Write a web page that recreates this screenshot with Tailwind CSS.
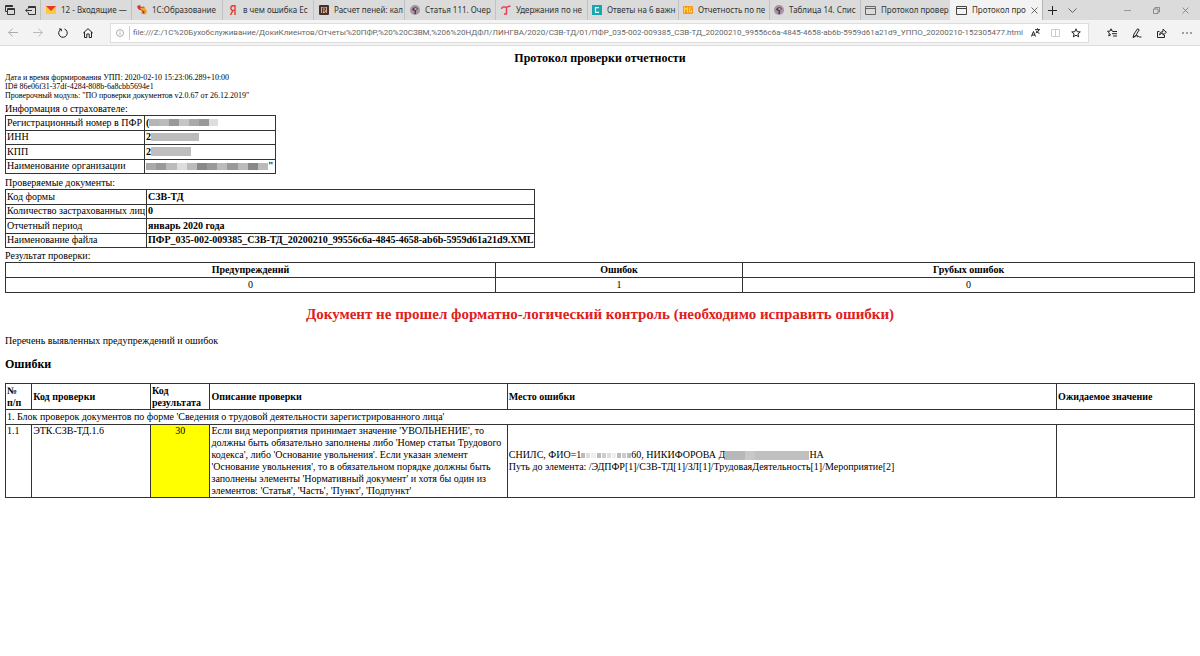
<!DOCTYPE html>
<html lang="ru">
<head>
<meta charset="utf-8">
<title>Протокол проверки отчетности</title>
<script src="https://cdn.jsdelivr.net/npm/@tailwindcss/browser@4"></script>
</head>
<body class="bg-white text-black font-['Liberation_Serif',serif] text-[10px] leading-[12px]">
<header class="font-['Noto_Sans',sans-serif] text-[8px] leading-[12px] text-[#333]">
  <nav class="flex h-5 items-stretch bg-[#dadbda]" aria-label="Вкладки">
    <div class="flex w-10 shrink-0 items-center justify-between pl-[5px] pr-1">
      <button aria-label="Отложенные вкладки"><svg class="size-[10px]" viewBox="0 0 10 10" fill="none" stroke="#333"><path d="M2 6.500H.5v-6h7V2M.5 1.500h7M2.500 3.500h7v6h-7zM2.500 4.500h7"/></svg></button>
      <button aria-label="Отложить вкладки"><svg class="h-[9px] w-[11px]" viewBox="0 0 11 9" fill="none" stroke="#333"><path d="M3.500 2.500V.5h7v8h-7v-2M3.500 1.500h7M7 4.500H.7M2.500 2.700.7 4.500l1.800 1.800"/></svg></button>
    </div>
    <a href="#" class="flex w-[91px] shrink-0 items-center gap-[5px] border-l border-[#c2c2c2] pl-[5px] whitespace-nowrap"><svg class="size-[10px] shrink-0" viewBox="0 0 10 10"><path d="M0 1h10v8H0z" fill="#ffc83a"/><path d="M0 1h10L5 6z" fill="#e3382e"/></svg><span>12 - Входящие —</span></a>
    <a href="#" class="flex w-[91px] shrink-0 items-center gap-[5px] border-l border-[#c2c2c2] pl-[5px] whitespace-nowrap"><svg class="size-[10px] shrink-0" viewBox="0 0 10 10"><path d="M0 1l3-1 1 2 3-.5 1 2-2 1 .500 2L3 5 1 4z" fill="#d33a2c"/><path d="M3 3l4-.5 3 3-1 4-5-1 1-3z" fill="#e8a72c"/><path d="M5 5l3 2-2 2z" fill="#b52c25"/></svg><span>1С:Образование</span></a>
    <a href="#" class="flex w-[91px] shrink-0 items-center gap-[6px] border-l border-[#c2c2c2] pl-[6px] whitespace-nowrap"><svg class="h-[10px] w-2 shrink-0" viewBox="0 0 8 10" fill="none" stroke="#e43d33" stroke-width="1.400"><path d="M6 10V.700H4.300C1 .700 1 5.400 4.300 5.400H6M4 5.400 1.500 10"/></svg><span>в чем ошибка Ес</span></a>
    <a href="#" class="flex w-[91px] shrink-0 items-center gap-[5px] border-l border-[#c2c2c2] pl-[5px] whitespace-nowrap"><svg class="size-[10px] shrink-0" viewBox="0 0 10 10"><rect width="10" height="10" rx="1" fill="#4a302b"/><path d="M2 2h6v6H2z" fill="#d8a98c"/><path d="M3.500 8V3h3v2h-2L7 8" fill="none" stroke="#352320" stroke-width=".8"/></svg><span>Расчет пеней: кал</span></a>
    <a href="#" class="flex w-[91px] shrink-0 items-center gap-[5px] border-l border-[#c2c2c2] pl-[5px] whitespace-nowrap"><svg class="size-[10px] shrink-0" viewBox="0 0 10 10"><circle cx="5" cy="5" r="5" fill="#a595a4"/><path d="M2 5c0-3 5-4 6-1L6 5.500V9H4.500V6z" fill="#553d50"/><path d="M4.500 3h2v2h-2z" fill="#d3a194"/></svg><span>Статья 111. Очер</span></a>
    <a href="#" class="flex w-[92px] shrink-0 items-center gap-[5px] border-l border-[#c2c2c2] pl-[5px] whitespace-nowrap"><svg class="size-[10px] shrink-0" viewBox="0 0 10 10" fill="none" stroke="#e6425a" stroke-width="1.500"><path d="M.7 4C.7 1 3 2.200 5 2.200S8 1 9.500 1M5.500 2.200V9M3 9h3"/></svg><span>Удержания по не</span></a>
    <a href="#" class="flex w-[91px] shrink-0 items-center gap-[5px] border-l border-[#c2c2c2] pl-1 whitespace-nowrap"><svg class="size-[10px] shrink-0" viewBox="0 0 10 10"><path fill="#18a7ae" d="M0 0h10v10H0z"/><path d="M7 2.700H3.500v4.600H7" fill="none" stroke="#fff" stroke-width="1.200"/></svg><span>Ответы на 6 важн</span></a>
    <a href="#" class="flex w-[91px] shrink-0 items-center gap-[5px] border-l border-[#c2c2c2] pl-1 whitespace-nowrap"><svg class="size-[10px] shrink-0" viewBox="0 0 10 10"><rect y="1" width="10" height="8" rx="1" fill="#f79a1c"/><path d="M1.500 7.500v-5L3 4.500l1.500-2v5M8.500 3h-2v4h2V5" fill="none" stroke="#ffdc50"/></svg><span>Отчетность по пе</span></a>
    <a href="#" class="flex w-[91px] shrink-0 items-center gap-[5px] border-l border-[#c2c2c2] pl-1 whitespace-nowrap"><svg class="size-[10px] shrink-0" viewBox="0 0 10 10"><circle cx="5" cy="5" r="5" fill="#a595a4"/><path d="M2 5c0-3 5-4 6-1L6 5.500V9H4.500V6z" fill="#553d50"/><path d="M4.500 3h2v2h-2z" fill="#d3a194"/></svg><span>Таблица 14. Спис</span></a>
    <a href="#" class="flex w-[90px] shrink-0 items-center gap-[5px] border-l border-[#c2c2c2] pl-1 whitespace-nowrap"><svg class="h-[9px] w-[11px] shrink-0" viewBox="0 0 11 9" fill="none" stroke="#666"><path d="M.5.5h10v8H.5zM.5 2.500h10"/></svg><span>Протокол провер</span></a>
    <div class="flex w-[93px] shrink-0 items-center gap-[5px] border-r border-[#b5b5b5] bg-[#f3f3f3] pl-[6px] pr-[7px] whitespace-nowrap"><svg class="h-[9px] w-[11px] shrink-0" viewBox="0 0 11 9" fill="none" stroke="#444"><path d="M.5.5h10v8H.5zM.5 2.500h10"/></svg><a href="#" class="flex-1">Протокол про</a><button aria-label="Закрыть вкладку"><svg class="size-[7px]" viewBox="0 0 7 7" stroke="#444" stroke-width=".8"><path d="m.5.5 6 6m0-6-6 6"/></svg></button></div>
    <button class="pl-[5px]" aria-label="Новая вкладка"><svg class="size-[9px]" viewBox="0 0 9 9" stroke="#222"><path d="M4.500 0v9M0 4.500h9"/></svg></button>
    <button class="pl-[11px]" aria-label="Список вкладок"><svg class="h-[5px] w-[9px]" viewBox="0 0 9 5" fill="none" stroke="#555" stroke-width=".9"><path d="m.5.5 4 4 4-4"/></svg></button>
    <div class="ml-auto flex items-center gap-[22px] pr-[11px]">
      <button aria-label="Свернуть"><svg class="size-[7px]" viewBox="0 0 7 7" stroke="#999"><path d="M0 3.500h7"/></svg></button>
      <button aria-label="Восстановить"><svg class="size-[7px]" viewBox="0 0 7 7" fill="none" stroke="#777" stroke-width=".8"><path d="M.5 2h4.500v4.500H.5zM2 2V.5h4.500V5H5"/></svg></button>
      <button aria-label="Закрыть"><svg class="size-[7px]" viewBox="0 0 7 7" stroke="#777" stroke-width=".8"><path d="m.5.5 6 6m0-6-6 6"/></svg></button>
    </div>
  </nav>
  <div class="flex h-[26px] items-center border-b border-[#dcdcdc] bg-[#f3f3f3]">
    <div class="flex w-[110px] shrink-0 items-center gap-[15px] pl-2">
      <button aria-label="Назад"><svg class="h-[9px] w-[10px]" viewBox="0 0 10 9" fill="none" stroke="#aaa"><path d="M10 4.500H.7m4-4-4 4 4 4"/></svg></button>
      <button aria-label="Вперед"><svg class="h-[9px] w-[10px]" viewBox="0 0 10 9" fill="none" stroke="#bbb"><path d="M0 4.500h9.300m-4-4 4 4-4 4"/></svg></button>
      <button aria-label="Обновить"><svg class="size-[10px]" viewBox="0 0 10 10" fill="none" stroke="#222"><path d="M6.500 1A4.300 4.300 0 1 1 3 1.200M1 1h2.300v2.300"/></svg></button>
      <button aria-label="Домой"><svg class="size-[10px]" viewBox="0 0 10 10" fill="none" stroke="#222"><path d="M.3 5 5 .7 9.700 5M1.500 4v5.500h2.300V6h2.400v3.500h2.300V4"/></svg></button>
    </div>
    <div class="flex h-5 min-w-0 flex-1 items-center border border-[#dedede] bg-white">
      <svg class="ml-[5px] size-2 shrink-0" viewBox="0 0 8 8" fill="none" stroke="#888" stroke-width=".7"><circle cx="4" cy="4" r="3.500"/><path d="M4 3.500V6M4 2v.8"/></svg>
      <input aria-label="Адрес" class="ml-[5px] h-[14px] min-w-0 flex-1 border-l border-[#ccc] pl-[3px] font-['Roboto',sans-serif] text-[8px] text-[#666] outline-none" value="file:///Z:/1C%20Бухобслуживание/ДокиКлиентов/Отчеты%20ПФР,%20%20СЗВМ,%206%20НДФЛ/ЛИНГВА/2020/СЗВ-ТД/01/ПФР_035-002-009385_СЗВ-ТД_20200210_99556c6a-4845-4658-ab6b-5959d61a21d9_УППО_20200210-152305477.html">
      <div class="flex shrink-0 items-center gap-[11px] pr-[7px]">
        <button aria-label="Перевести"><svg class="size-[9px]" viewBox="0 0 9 9" fill="none" stroke="#222"><path d="M.4 8.500 2.500 3.500l2 5M1 7h3M4 1.700h5M6.500.3v1.400M8 1.700Q7 4.500 4.800 5M5.300 3Q6.500 5 8.500 5.300"/></svg></button>
        <button aria-label="Режим чтения"><svg class="h-2 w-[9px]" viewBox="0 0 9 8" fill="none" stroke="#ccc"><path d="M.5.5h8v7h-8zM4.500.5v7"/></svg></button>
        <button aria-label="В избранное"><svg class="size-[10px]" viewBox="0 0 10 10" fill="none" stroke="#222"><path d="m5 .8 1.200 2.900 3.100.2-2.400 2 .8 3L5 7.200 2.300 8.900l.8-3-2.400-2 3.100-.2z"/></svg></button>
      </div>
    </div>
    <div class="flex w-[111px] shrink-0 items-center gap-[15px] pl-[18px]">
      <button aria-label="Избранное"><svg class="h-[9px] w-[10px]" viewBox="0 0 10 9" fill="none" stroke="#222"><path d="M6 3.200 5 3.100 4 .8 3 3.100l-2.500.2L2.400 5l-.6 3L4 6.500M6 3.500h4M5 5.700h5M6 8h4"/></svg></button>
      <button aria-label="Заметки"><svg class="size-[10px]" viewBox="0 0 10 10" fill="none" stroke="#222"><path d="M1 9.500 2 6 5.500.8l1.700 1L3.800 7.500 1 9.500Q4 8 5 7.500t.5 1.300Q7 8 7.300 9H9.500"/></svg></button>
      <button aria-label="Поделиться"><svg class="size-[10px]" viewBox="0 0 10 10" fill="none" stroke="#222"><path d="M2.500 3.500h-2v6h7V7M2.500 7Q2.500 3.500 6 3.500V1.200L9.400 4.300 6 7.200V5Q4 5 2.500 7z"/></svg></button>
      <button aria-label="Меню"><svg class="h-[2px] w-[10px]" viewBox="0 0 10 2" fill="#333"><circle cx="1" cy="1" r=".8"/><circle cx="5" cy="1" r=".8"/><circle cx="9" cy="1" r=".8"/></svg></button>
    </div>
  </div>
</header>
<main class="px-[5px]">
  <h1 class="mt-[5px] text-center text-[12px] leading-[14px] font-bold">Протокол проверки отчетности</h1>
  <div class="mt-2 text-[8px] leading-[9px]">
    <p>Дата и время формирования УПП: 2020-02-10 15:23:06.289+10:00</p>
    <p>ID# 86e06f31-37df-4284-808b-6a8cbb5694e1</p>
    <p>Проверочный модуль: "ПО проверки документов v2.0.67 от 26.12.2019"</p>
  </div>
  <table class="mt-[3px] h-[59px] border-collapse [&_td]:border [&_th]:border [&_td]:border-[#333] [&_th]:border-[#333] [&_td]:px-px [&_th]:px-px">
    <caption class="h-3 text-left whitespace-nowrap">Информация о страхователе:</caption>
    <tbody>
      <tr><th scope="row" class="w-[139px] text-left font-normal whitespace-nowrap">Регистрационный номер в ПФР</th><td class="w-[131px] font-bold"><div class="flex items-center">(<span class="flex h-[7px] w-[69px] [&>i]:flex-1"><i class="bg-[#b5b5b5]"></i><i class="bg-[#bbb]"></i><i class="bg-[#999]"></i><i class="bg-[#c5c5c5]"></i><i class="bg-[#aaa]"></i><i class="bg-[#999]"></i><i class="bg-[#ddd]"></i></span></div></td></tr>
      <tr><th scope="row" class="text-left font-normal">ИНН</th><td class="font-bold"><div class="flex items-center">2<span class="h-2 w-12 bg-[#bbb]"></span></div></td></tr>
      <tr><th scope="row" class="text-left font-normal">КПП</th><td class="font-bold"><div class="flex items-center">2<span class="h-[9px] w-10 bg-[#bebebe]"></span></div></td></tr>
      <tr><th scope="row" class="text-left font-normal">Наименование организации</th><td class="font-bold"><div class="flex items-center"><span class="flex h-[7px] w-[122px] [&>i]:flex-1"><i class="bg-[#aaa]"></i><i class="bg-[#999]"></i><i class="bg-[#bbb]"></i><i class="bg-[#ddd]"></i><i class="bg-[#bbb]"></i><i class="bg-[#888]"></i><i class="bg-[#999]"></i><i class="bg-[#bbb]"></i><i class="bg-[#999]"></i><i class="bg-[#bbb]"></i><i class="bg-[#888]"></i><i class="bg-[#bbb]"></i></span>"</div></td></tr>
    </tbody>
  </table>
  <table class="mt-[3px] h-[59px] border-collapse [&_td]:border [&_th]:border [&_td]:border-[#333] [&_th]:border-[#333] [&_td]:px-px [&_th]:px-px">
    <caption class="h-3 text-left">Проверяемые документы:</caption>
    <tbody>
      <tr><th scope="row" class="w-[141px] text-left font-normal">Код формы</th><td class="font-bold">СЗВ-ТД</td></tr>
      <tr><th scope="row" class="text-left font-normal whitespace-nowrap">Количество застрахованных лиц</th><td class="font-bold">0</td></tr>
      <tr><th scope="row" class="text-left font-normal">Отчетный период</th><td class="font-bold">январь 2020 года</td></tr>
      <tr><th scope="row" class="text-left font-normal">Наименование файла</th><td class="font-bold whitespace-nowrap">ПФР_035-002-009385_СЗВ-ТД_20200210_99556c6a-4845-4658-ab6b-5959d61a21d9.XML</td></tr>
    </tbody>
  </table>
  <table class="mt-[2px] w-full table-fixed border-collapse text-center [&_td]:border [&_th]:border [&_td]:border-[#333] [&_th]:border-[#333]">
    <caption class="h-3 text-left">Результат проверки:</caption>
    <thead><tr class="h-[15px]"><th class="w-[41.2%]">Предупреждений</th><th class="w-[20.8%]">Ошибок</th><th>Грубых ошибок</th></tr></thead>
    <tbody><tr class="h-[15px]"><td>0</td><td>1</td><td>0</td></tr></tbody>
  </table>
  <h2 class="mt-3 text-center text-[15px] leading-[18px] font-bold text-[#e02020]">Документ не прошел форматно-логический контроль (необходимо исправить ошибки)</h2>
  <p class="mt-3">Перечень выявленных предупреждений и ошибок</p>
  <h3 class="mt-[10px] text-[12px] leading-[14px] font-bold">Ошибки</h3>
  <table class="mt-3 w-full table-fixed border-collapse [&_td]:border [&_th]:border [&_td]:border-[#333] [&_th]:border-[#333] [&_td]:px-px [&_th]:px-px [&_th]:text-left">
    <thead><tr class="h-[26px]"><th class="w-[2.2%]">№<br>п/п</th><th class="w-[10%]">Код проверки</th><th class="w-[5%]">Код результата</th><th class="w-[25%]">Описание проверки</th><th class="w-[46.2%]">Место ошибки</th><th>Ожидаемое значение</th></tr></thead>
    <tbody>
      <tr class="h-[15px]"><td colspan="6">1. Блок проверок документов по форме 'Сведения о трудовой деятельности зарегистрированного лица'</td></tr>
      <tr><td class="align-top">1.1</td><td class="align-top">ЭТК.СЗВ-ТД.1.6</td><td class="bg-[#ff0] text-center align-top">30</td><td>Если вид мероприятия принимает значение 'УВОЛЬНЕНИЕ', то должны быть обязательно заполнены либо 'Номер статьи Трудового кодекса', либо 'Основание увольнения'. Если указан элемент 'Основание увольнения', то в обязательном порядке должны быть заполнены элементы 'Нормативный документ' и хотя бы один из элементов: 'Статья', 'Часть', 'Пункт', 'Подпункт'</td>
      <td><div class="flex items-center whitespace-nowrap">СНИЛС, ФИО=1<span class="flex h-[5px] w-[50px] gap-px [&>i]:flex-1"><i class="bg-[#bbb]"></i><i class="bg-[#ddd]"></i><i class="bg-[#eee]"></i><i class="bg-[#bbb]"></i><i class="bg-[#ccc]"></i><i class="bg-[#ddd]"></i><i class="bg-[#eee]"></i><i class="bg-[#bbb]"></i><i class="bg-[#ccc]"></i><i class="bg-[#bbb]"></i></span>60, НИКИФОРОВА Д<span class="flex h-[9px] w-[84px]"><i class="w-5 bg-[#b8b8b8]"></i><i class="w-[10px] bg-[#c8c8c8]"></i><i class="flex-1 bg-[#c0c0c0]"></i></span>НА</div><div>Путь до элемента: /ЭДПФР[1]/СЗВ-ТД[1]/ЗЛ[1]/ТрудоваяДеятельность[1]/Мероприятие[2]</div></td><td></td></tr>
    </tbody>
  </table>
</main>
</body>
</html>
